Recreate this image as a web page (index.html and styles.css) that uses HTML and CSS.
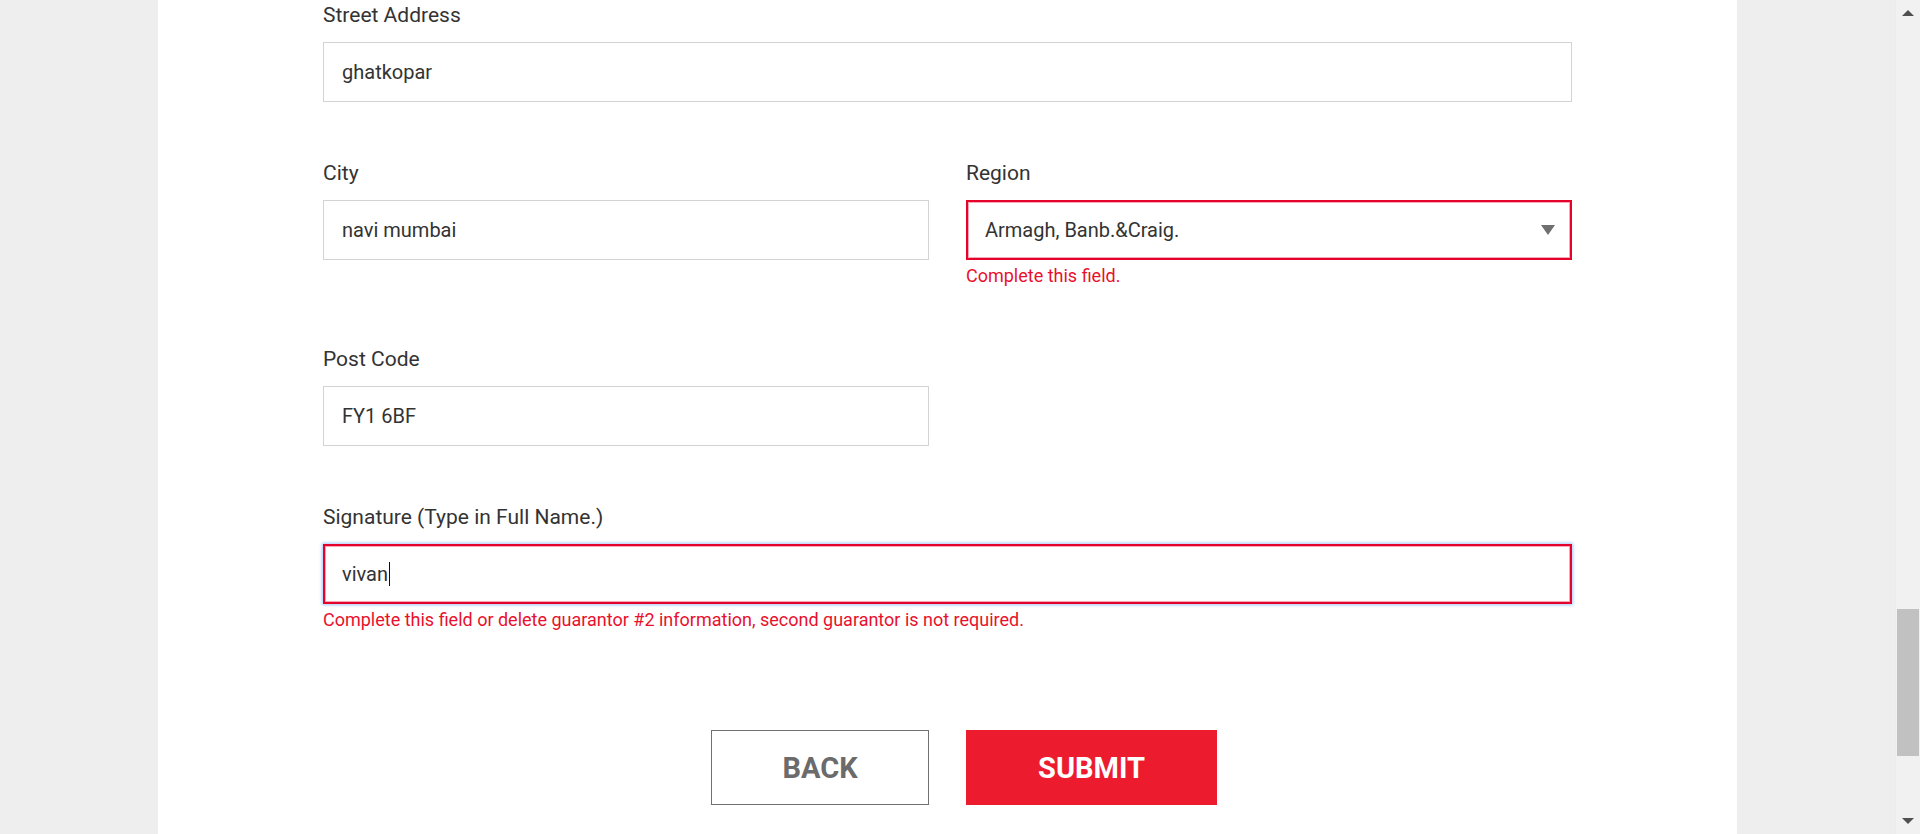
FILE: index.html
```html
<!DOCTYPE html>
<html lang="en">
<head>
<meta charset="utf-8">
<title>Guarantor form</title>
<link rel="stylesheet" href="styles.css">
</head>
<body>
<div class="page">
  <main class="viewport">
    <div class="panel">
      <form class="form">
        <div class="group">
          <label class="label">Street Address</label>
          <div class="field">ghatkopar</div>
        </div>
        <div class="row">
          <div class="group">
            <label class="label">City</label>
            <div class="field">navi mumbai</div>
          </div>
          <div class="group">
            <label class="label">Region</label>
            <div class="field select invalid">
              <span>Armagh, Banb.&amp;Craig.</span>
              <span class="arrow"></span>
            </div>
            <div class="error">Complete this field.</div>
          </div>
        </div>
        <div class="row">
          <div class="group">
            <label class="label">Post Code</label>
            <div class="field">FY1 6BF</div>
          </div>
        </div>
        <div class="group">
          <label class="label">Signature (Type in Full Name.)</label>
          <div class="field invalid focused">vivan<span class="caret"></span></div>
          <div class="error">Complete this field or delete guarantor #2 information, second guarantor is not required.</div>
        </div>
        <div class="row actions">
          <button type="button" class="btn back">BACK</button>
          <button type="button" class="btn submit">SUBMIT</button>
        </div>
      </form>
    </div>
  </main>
  <div class="scrollbar">
    <span class="sb-arrow up"></span>
    <div class="sb-track"><div class="sb-thumb"></div></div>
    <span class="sb-arrow down"></span>
  </div>
</div>
</body>
</html>
```
FILE: styles.css
```css
html, body {
  margin: 0;
  padding: 0;
  height: 100%;
  overflow: hidden;
}
body {
  background: #eeeeee;
  font-family: Roboto, "Liberation Sans", sans-serif;
  color: #333333;
}
.page {
  display: flex;
  height: 834px;
}
.viewport {
  flex: 1;
  display: flex;
  justify-content: center;
  padding: 0 158px;
}
.panel {
  flex: 1;
  background: #ffffff;
  padding: 3px 165px 0;
}
.form {
  display: flex;
  flex-direction: column;
  gap: 59px;
}
.row {
  display: grid;
  grid-template-columns: 1fr 1fr;
  column-gap: 37px;
}
.group {
  display: flex;
  flex-direction: column;
}
.label {
  display: block;
  font-size: 21px;
  line-height: 24px;
  margin-bottom: 15px;
  color: #333333;
}
.field {
  box-sizing: border-box;
  height: 60px;
  border: 1px solid #d3d3d3;
  padding: 0 18px;
  display: flex;
  align-items: center;
  font-size: 20px;
  color: #333333;
  background: #ffffff;
}
.field.invalid {
  border: 2px solid #e5032b;
  padding: 0 17px;
  box-shadow: inset 0 0 0 1px rgba(229, 3, 43, 0.35);
}
.field.focused {
  box-shadow: inset 0 0 0 1px rgba(229, 3, 43, 0.35), 0 0 3px 1px rgba(140, 185, 245, 0.8);
}
.select {
  justify-content: space-between;
}
.arrow {
  width: 0;
  height: 0;
  border-left: 7.5px solid transparent;
  border-right: 7.5px solid transparent;
  border-top: 10px solid #6f6f6f;
  margin-right: -2px;
}
.caret {
  display: inline-block;
  width: 1px;
  height: 24px;
  background: #111111;
  margin-left: 1px;
}
.error {
  margin-top: 4px;
  font-size: 18px;
  line-height: 24px;
  color: #e8112d;
}
.actions {
  margin-top: 39px;
}
.btn {
  box-sizing: border-box;
  height: 75px;
  font-family: Roboto, "Liberation Sans", sans-serif;
  font-weight: 700;
  font-size: 29px;
  padding: 0;
  cursor: pointer;
}
.back {
  justify-self: end;
  width: 218px;
  background: #ffffff;
  border: 1px solid #707070;
  color: #6b6b6b;
}
.submit {
  justify-self: start;
  width: 251px;
  background: #ec1c2e;
  border: none;
  color: #ffffff;
}
.scrollbar {
  width: 25px;
  background: #f1f1f1;
  border-left: 1px solid #ebebeb;
  box-sizing: border-box;
  display: flex;
  flex-direction: column;
  align-items: center;
}
.sb-arrow {
  width: 0;
  height: 0;
  border-left: 6px solid transparent;
  border-right: 6px solid transparent;
}
.sb-arrow.up {
  margin-top: 10px;
  border-bottom: 6px solid #505050;
}
.sb-arrow.down {
  margin-bottom: 10px;
  border-top: 6px solid #505050;
}
.sb-track {
  flex: 1;
  align-self: stretch;
  display: flex;
  flex-direction: column;
  justify-content: flex-end;
  padding: 0 1px 62px 1px;
}
.sb-thumb {
  height: 147px;
  background: #c1c1c1;
}
```
